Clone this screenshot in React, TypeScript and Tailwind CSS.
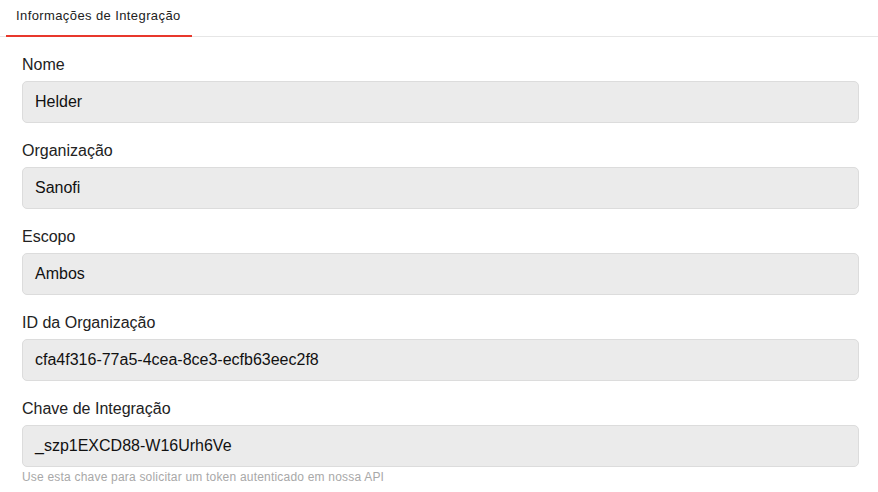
import React from 'react';

const fields = [
  { label: 'Nome', value: 'Helder' },
  { label: 'Organização', value: 'Sanofi' },
  { label: 'Escopo', value: 'Ambos' },
  { label: 'ID da Organização', value: 'cfa4f316-77a5-4cea-8ce3-ecfb63eec2f8' },
  { label: 'Chave de Integração', value: '_szp1EXCD88-W16Urh6Ve', hint: 'Use esta chave para solicitar um token autenticado em nossa API' },
];

export default function App() {
  return (
    <div className="w-[878px] h-[492px] bg-white overflow-hidden font-['Liberation_Sans',Arial,sans-serif] text-[#222]">
      {/* Tabs */}
      <div className="flex border-b border-[#e6e6e6]">
        <div className="ml-[6px] h-[37px] -mb-px pl-[10px] pr-[11px] pb-[3px] flex items-center border-b-2 border-[#e8382c] text-[13px] tracking-[0.4px] text-[#222]">
          Informações de Integração
        </div>
      </div>

      {/* Form */}
      <div className="pl-[22px] pr-[19px] pt-[16px]">
        {fields.map((f) => (
          <div key={f.label} className="mb-[16px]">
            <label className="block text-[16px] leading-[24px] text-[#222] mb-[4px]">{f.label}</label>
            <div className="h-[42px] rounded-[5px] bg-[#ebebeb] border border-[#dcdcdc] px-[12px] flex items-center text-[16px] text-[#111]">
              {f.value}
            </div>
            {f.hint && <p className="mt-[2px] text-[12px] leading-[16px] tracking-[0.2px] text-[#a8a8a8]">{f.hint}</p>}
          </div>
        ))}
      </div>
    </div>
  );
}
